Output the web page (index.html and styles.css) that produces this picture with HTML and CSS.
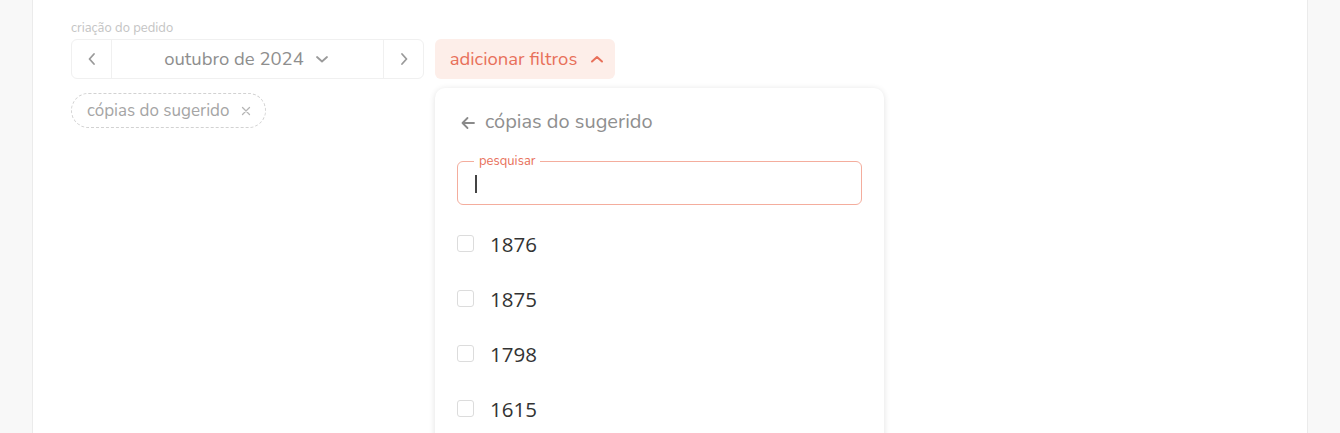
FILE: index.html
```html
<!DOCTYPE html>
<html lang="pt">
<head>
<meta charset="utf-8">
<link rel="stylesheet" href="styles.css">
</head>
<body>
<div class="card">
  <div class="field-label">criação do pedido</div>
  <div class="toolbar">
    <div class="month-picker">
      <button class="mp-arrow"><svg width="10" height="14" viewBox="0 0 10 14"><path d="M7 2 L2.5 7 L7 12" fill="none" stroke="#9a9a9a" stroke-width="1.8" stroke-linecap="round" stroke-linejoin="round"/></svg></button>
      <div class="mp-center"><span>outubro de 2024</span><svg width="14" height="10" viewBox="0 0 14 10"><path d="M2 3 L7 7.5 L12 3" fill="none" stroke="#9a9a9a" stroke-width="1.8" stroke-linecap="round" stroke-linejoin="round"/></svg></div>
      <button class="mp-arrow right"><svg width="10" height="14" viewBox="0 0 10 14"><path d="M3 2 L7.5 7 L3 12" fill="none" stroke="#9a9a9a" stroke-width="1.8" stroke-linecap="round" stroke-linejoin="round"/></svg></button>
    </div>
    <div class="filter-wrap">
      <button class="filter-btn"><span>adicionar filtros</span><svg width="14" height="10" viewBox="0 0 14 10"><path d="M2 7.5 L7 3 L12 7.5" fill="none" stroke="#e8705a" stroke-width="2" stroke-linecap="round" stroke-linejoin="round"/></svg></button>
      <div class="dropdown">
        <div class="dd-head">
          <svg width="18" height="18" viewBox="0 0 18 18"><path d="M15 9 H3.5 M8.5 4 L3.5 9 L8.5 14" fill="none" stroke="#8a8a8a" stroke-width="1.8" stroke-linecap="round" stroke-linejoin="round"/></svg>
          <span>cópias do sugerido</span>
        </div>
        <div class="search">
          <span class="search-label">pesquisar</span>
          <span class="caret"></span>
        </div>
        <ul class="options">
          <li><span class="box"></span>1876</li>
          <li><span class="box"></span>1875</li>
          <li><span class="box"></span>1798</li>
          <li><span class="box"></span>1615</li>
        </ul>
      </div>
    </div>
  </div>
  <div class="chips">
    <div class="chip"><span>cópias do sugerido</span><svg width="10" height="10" viewBox="0 0 10 10"><path d="M1.5 1.5 L8.5 8.5 M8.5 1.5 L1.5 8.5" stroke="#b5b5b5" stroke-width="1.3" stroke-linecap="round"/></svg></div>
  </div>
</div>
</body>
</html>
```
FILE: styles.css
```css
* { box-sizing: border-box; }
html, body { margin: 0; padding: 0; height: 100%; overflow: hidden; }
body {
  background: #f8f8f8;
  font-family: "Nunito", "Lato", "Open Sans", sans-serif;
}
.card {
  margin: 0 32px 0 32px;
  height: 100%;
  background: #fff;
  border-left: 1px solid #ebebeb;
  border-right: 1px solid #ebebeb;
  padding: 20px 0 0 38px;
}
.field-label {
  font-size: 13px;
  color: #c4c4c4;
  line-height: 17px;
  margin-bottom: 2px;
}
.toolbar {
  display: flex;
  gap: 11px;
  align-items: flex-start;
}
.month-picker {
  display: flex;
  width: 353px;
  height: 40px;
  border: 1px solid #f0f0f0;
  border-radius: 6px;
}
.mp-arrow {
  width: 40px;
  border: 0;
  background: transparent;
  display: flex;
  align-items: center;
  justify-content: center;
  border-right: 1px solid #f0f0f0;
  padding: 0;
}
.mp-arrow.right { border-right: 0; border-left: 1px solid #f0f0f0; }
.mp-center {
  flex: 1;
  display: flex;
  align-items: center;
  justify-content: center;
  gap: 11px;
  font-size: 18.5px;
  color: #8e8e8e;
  padding-right: 2px;
}
.filter-wrap { position: relative; }
.filter-btn {
  height: 40px;
  width: 180px;
  border: 0;
  border-radius: 6px;
  background: #fdeee9;
  color: #e8705a;
  font-family: inherit;
  font-size: 18.5px;
  display: flex;
  align-items: center;
  justify-content: center;
  gap: 13px;
  padding: 0 0 0 4px;
}
.dropdown {
  position: absolute;
  top: 49px;
  left: 0;
  width: 449px;
  height: 400px;
  background: #fff;
  border-radius: 10px;
  box-shadow: 0 1px 6px rgba(0,0,0,0.12);
  padding: 20px 22px 0 22px;
  z-index: 5;
}
.dd-head {
  display: flex;
  align-items: center;
  gap: 8px;
  font-size: 20px;
  color: #8f8f8f;
  height: 26px;
  padding-left: 2px;
}
.dd-head svg { margin-top: 3px; }
.search {
  margin-top: 27px;
  height: 44px;
  border: 1px solid #f4ad9d;
  border-radius: 6px;
  padding: 0 0 0 17px;
  display: flex;
  align-items: center;
  position: relative;
}
.search-label {
  position: absolute;
  top: -8px;
  left: 16px;
  font-size: 13px;
  line-height: 14px;
  color: #e8705a;
  padding: 0 5px;
  background: #fff;
}
.caret {
  display: block;
  width: 2px;
  height: 18px;
  background: #444;
  margin-top: 2px;
}
.options {
  list-style: none;
  margin: 11px 0 0 0;
  padding: 0;
}
.options li {
  display: flex;
  align-items: center;
  height: 55px;
  font-family: "Open Sans", "Noto Sans", sans-serif;
  font-size: 20.5px;
  color: #333;
  gap: 16px;
}
.box {
  width: 17px;
  height: 17px;
  border: 1.5px solid #dcdcdc;
  border-radius: 3px;
  display: inline-block;
}
.chips { margin-top: 14px; display: flex; }
.chip {
  height: 35px;
  width: 195px;
  border: 1px dashed #d2d2d2;
  border-radius: 18px;
  display: flex;
  align-items: center;
  padding-left: 15px;
  gap: 12px;
  font-size: 17px;
  color: #a5a5a5;
}
```
